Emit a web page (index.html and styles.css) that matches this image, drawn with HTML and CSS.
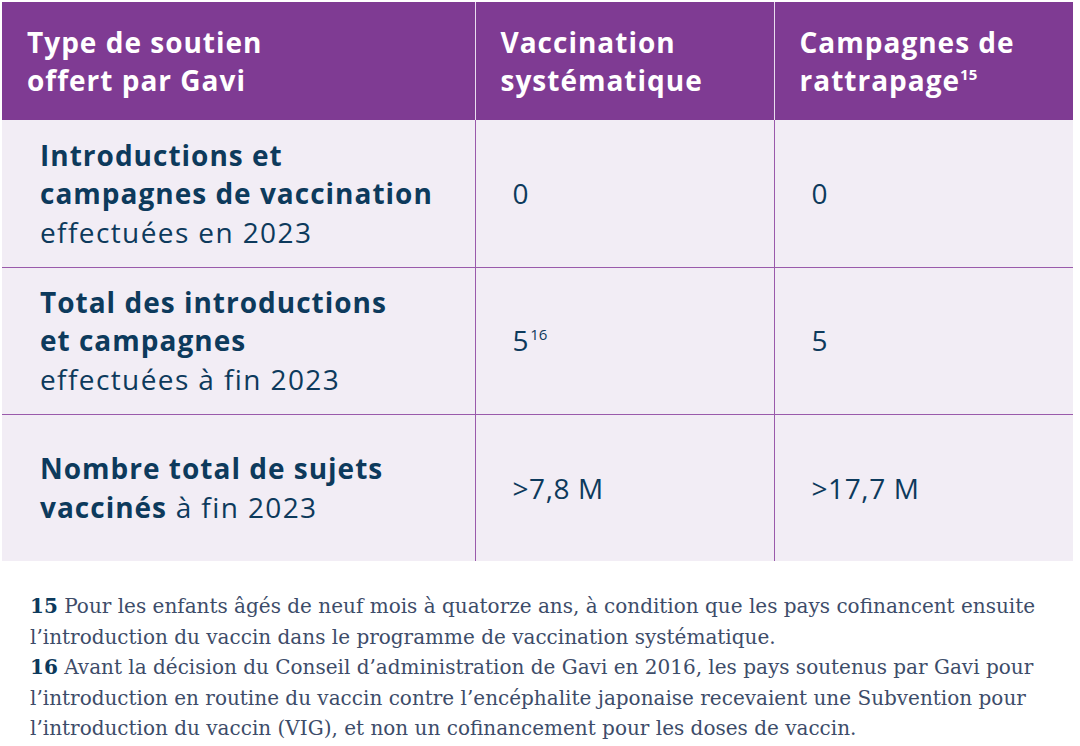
FILE: index.html
```html
<!DOCTYPE html>
<html lang="fr">
<head>
<meta charset="utf-8">
<link rel="stylesheet" href="styles.css">
</head>
<body>
<div class="page">
  <table class="support">
    <colgroup>
      <col class="c1"><col class="c2"><col class="c3">
    </colgroup>
    <thead>
      <tr>
        <th>Type de soutien<br>offert par Gavi</th>
        <th>Vaccination<br>systématique</th>
        <th>Campagnes de<br>rattrapage<sup>15</sup></th>
      </tr>
    </thead>
    <tbody>
      <tr>
        <td class="label"><b>Introductions et<br>campagnes de vaccination</b><br>effectuées en 2023</td>
        <td class="val">0</td>
        <td class="val">0</td>
      </tr>
      <tr>
        <td class="label"><b>Total des introductions<br>et campagnes</b><br>effectuées à fin 2023</td>
        <td class="val">5<sup>16</sup></td>
        <td class="val">5</td>
      </tr>
      <tr>
        <td class="label"><b>Nombre total de sujets<br>vaccinés</b> à fin 2023</td>
        <td class="val">&gt;7,8 M</td>
        <td class="val">&gt;17,7 M</td>
      </tr>
    </tbody>
  </table>
  <div class="notes">
    <p><b>15</b> Pour les enfants âgés de neuf mois à quatorze ans, à condition que les pays cofinancent ensuite<br>l’introduction du vaccin dans le programme de vaccination systématique.</p>
    <p><b>16</b> Avant la décision du Conseil d’administration de Gavi en 2016, les pays soutenus par Gavi pour<br>l’introduction en routine du vaccin contre l’encéphalite japonaise recevaient une Subvention pour<br>l’introduction du vaccin (VIG), et non un cofinancement pour les doses de vaccin.</p>
  </div>
</div>
</body>
</html>
```

FILE: styles.css
```css
html, body {
  margin: 0;
  padding: 0;
  background: #ffffff;
}

.page {
  padding: 2px 7px 0 2px;
}

.support {
  width: 1071px;
  border-collapse: collapse;
  table-layout: fixed;
  font-family: "Open Sans", "Noto Sans", sans-serif;
  font-size: 28px;
  line-height: 38.5px;
  letter-spacing: 1px;
  color: #0d3a5c;
}

.c1 { width: 473px; }
.c2 { width: 299px; }
.c3 { width: 299px; }

.support th {
  background: #7f3b93;
  color: #ffffff;
  font-weight: 700;
  text-align: left;
  vertical-align: middle;
  height: 118px;
  padding: 0 4px 0 25px;
  box-sizing: border-box;
  border-left: 1px solid #e9dcef;
}

.support th:first-child {
  border-left: none;
}

.support td {
  background: #f2edf5;
  vertical-align: middle;
  height: 147px;
  padding: 0 4px 0 37px;
  box-sizing: border-box;
  border-left: 1px solid #9a5aab;
  border-top: 1px solid #9a5aab;
}

.support td:first-child {
  border-left: none;
}

.support tbody tr:first-child td {
  border-top: none;
}

.support td.label {
  padding-left: 38px;
  font-weight: 400;
  letter-spacing: 1.4px;
}

.support td.val {
  letter-spacing: 0.6px;
}

.support td.label b {
  font-weight: 700;
  letter-spacing: 1px;
}

.support sup {
  font-size: 15px;
  line-height: 0;
  letter-spacing: 0;
  vertical-align: 11px;
  margin-left: 1px;
}

.support th sup {
  margin-left: 0;
}

.notes {
  margin-top: 30px;
  padding-left: 28px;
  font-family: "DejaVu Serif", "Liberation Serif", serif;
  font-size: 20px;
  line-height: 30.5px;
  color: #3d4c69;
}

.notes p {
  margin: 0;
}

.notes b {
  color: #0d3a5c;
  font-weight: 700;
}
```
